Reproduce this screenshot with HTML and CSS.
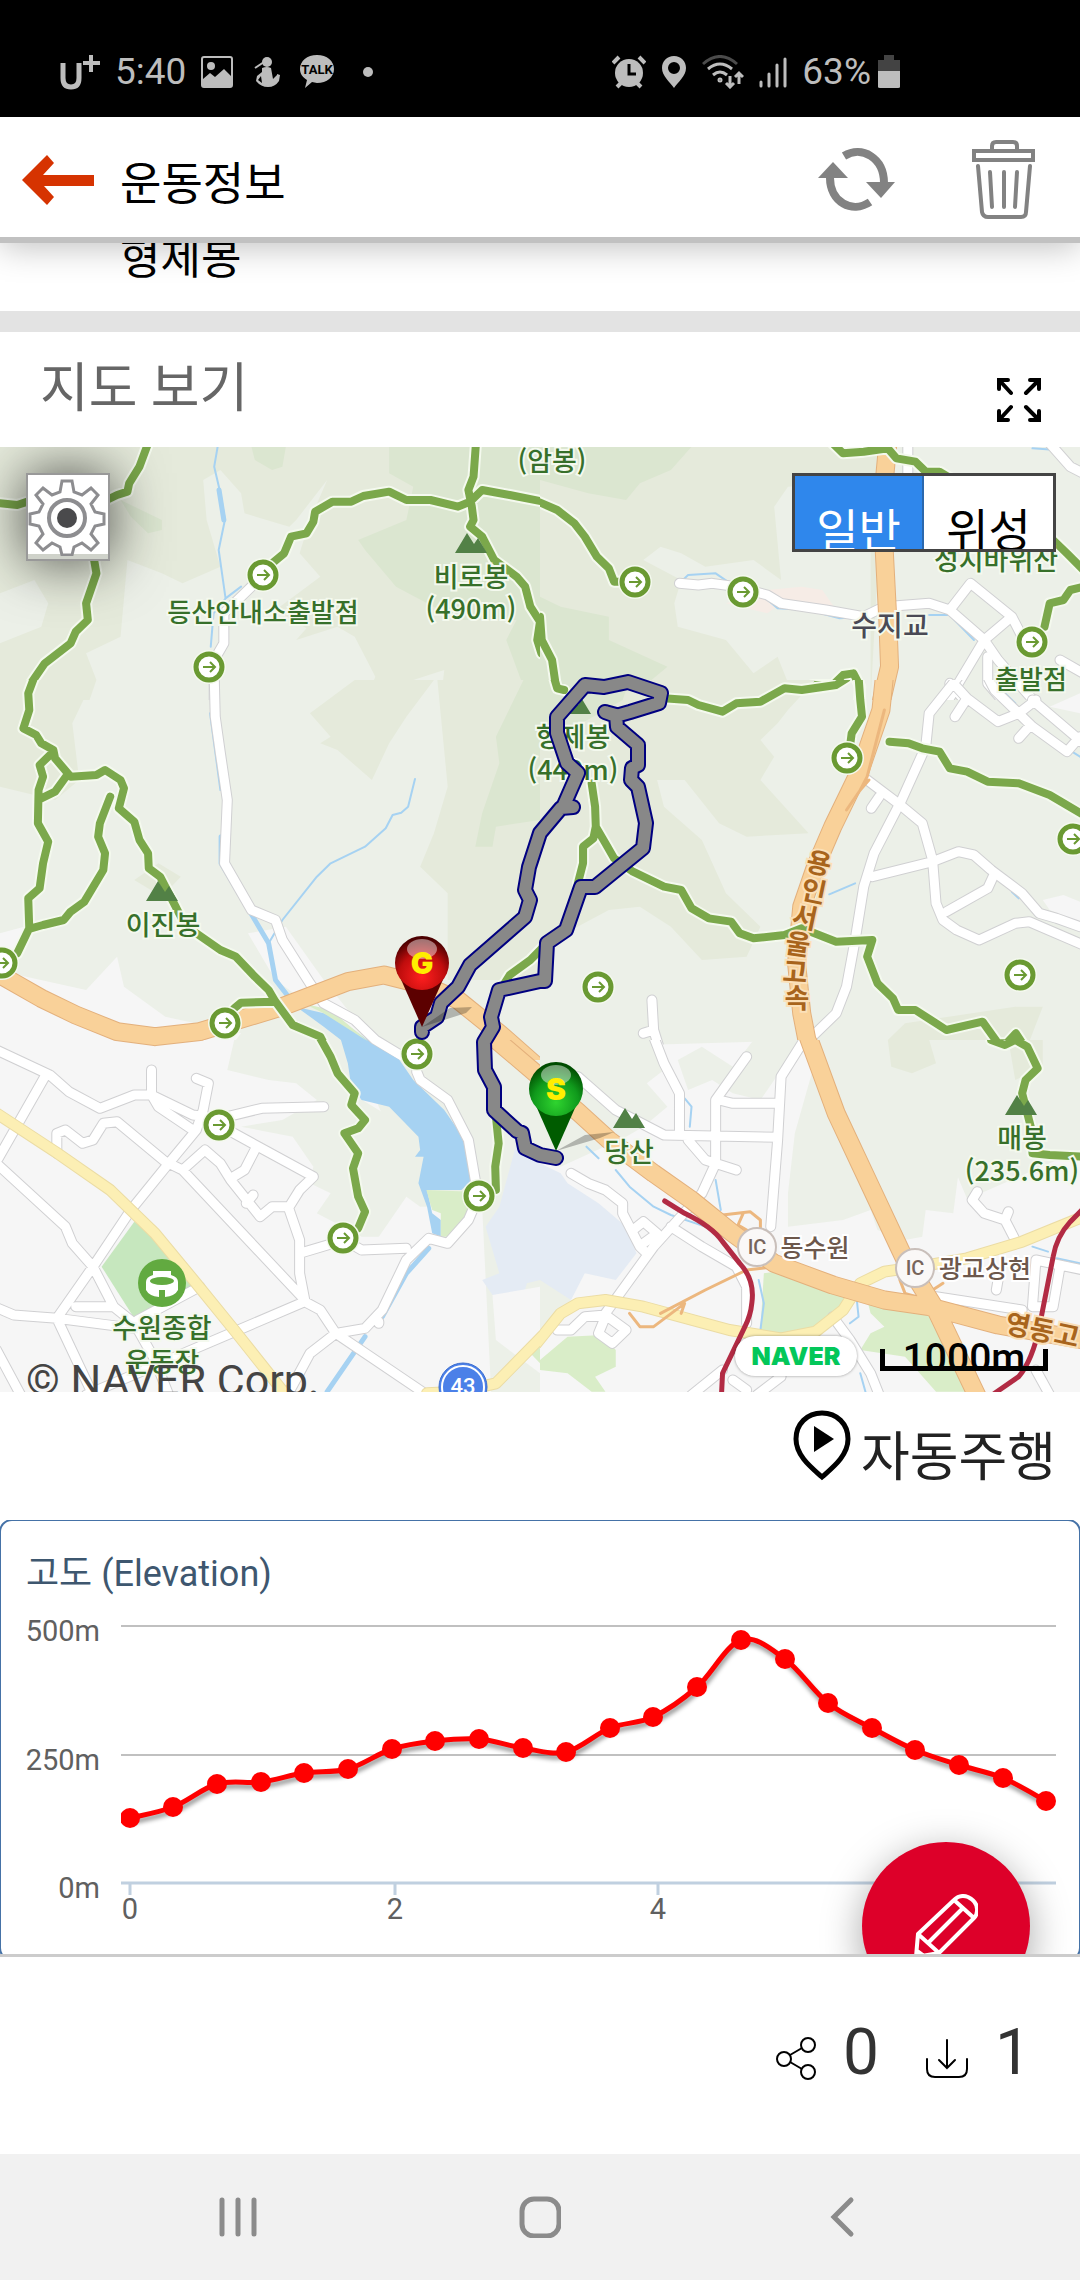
FILE: index.html
```html
<!doctype html>
<html lang="ko">
  <head>
    <meta charset="UTF-8" />
    <meta name="viewport" content="width=device-width, initial-scale=1.0" />
    <title>운동정보</title>
    <link rel="stylesheet" href="styles.css">
  </head>
  <body>
    <div class="status-bar">
      <div class="status-group">
        <svg width="40" height="36" viewBox="0 0 40 36"><path d="M3 9v15q0 9 8 9t8-9V9" fill="none" stroke="#bdbdbd" stroke-width="5" /><path d="M31 1v17M23 9h17" stroke="#bdbdbd" stroke-width="4" /></svg>
        <span>5:40</span>
        <svg width="32" height="32" viewBox="0 0 32 32"><rect x="1" y="1" width="30" height="30" rx="2" fill="none" stroke="#bdbdbd" stroke-width="2" /><circle cx="10" cy="10" r="4" /><path d="M2 23l7-6 5 4 9-8 7 7v10H2z" /></svg>
        <svg width="36" height="32" viewBox="0 0 36 32"><circle cx="19" cy="6" r="5" /><path d="M14 12q5-2 9 0l2 11 4-4V18l3 1-1 6q-4 6-11 6-7 0-12-6l1-5 5-4zM13 20l-3 4 4 3z" fill-rule="evenodd" /><path d="M7 12l9-6" stroke="#bdbdbd" stroke-width="2" /></svg>
        <svg width="36" height="36" viewBox="0 0 36 36"><path d="M18 1c10 0 17 6 17 14s-7 14-17 14l-5-1-7 6 2-8C3 23 1 19 1 15 1 7 8 1 18 1z" /><text x="18" y="20" class="talk">TALK</text></svg>
        <svg width="24" height="12" viewBox="0 0 24 12"><circle cx="18" cy="6" r="5" /></svg>
      </div>
      <div class="status-group status-group-tight">
        <svg width="34" height="34" viewBox="0 0 34 34"><path d="M1 8l6-6M33 8l-6-6M5 32l6-6M29 32l-6-6" stroke="#bdbdbd" stroke-width="4" /><circle cx="17" cy="18" r="14" /><path d="M17 9v10h7" fill="none" stroke="#000" stroke-width="3" /></svg>
        <svg width="26" height="34" viewBox="0 0 26 34"><path fill-rule="evenodd" d="M13 1c7 0 12 5 12 12 0 8-8 14-12 20C9 27 1 21 1 13 1 6 6 1 13 1zm0 6a6 6 0 100 12 6 6 0 000-12z" /></svg>
        <svg width="42" height="34" viewBox="0 0 42 34" fill="none" stroke="#bdbdbd" stroke-width="3"><path d="M1 9q17-15 34 0" stroke="#4b4b4b" /><path d="M6 14q12-10 24 0M11 20q7-6 14 0M28 21v11m-4-4l4 4 4-4M37 29V18m-4 4l4-4 4 4" /><circle cx="18" cy="25" r="1" /></svg>
        <svg width="28" height="34" viewBox="0 0 28 34" stroke="#bdbdbd" stroke-width="3" stroke-linecap="round"><path d="M2 27v4M10 19v12M18 10v21M26 4v27" /></svg>
        <span>63%</span>
        <svg class="battery" width="22" height="34" viewBox="0 0 22 34"><path d="M6 0h10v5h6v11H0V5h6z" fill="#434343" /><path d="M0 16h22v16q0 1-2 1H2q-2 0-2-1z" /></svg>
      </div>
    </div>

    <header class="app-bar">
      <button class="icon-button" aria-label="뒤로">
        <svg width="72" height="52" viewBox="0 0 72 52"><path d="M72 21v11H22l10 11-7 8L0 26 25 1l7 8-11 12z" fill="#d63301" /></svg>
      </button>
      <h1>운동정보</h1>
      <button class="icon-button" aria-label="새로고침">
        <svg width="78" height="64" viewBox="0 0 78 64"><g fill="none" stroke="#828282" stroke-width="8"><path d="M26 8C44-3 66 10 66 35" /><path d="M52 54C34 66 12 54 12 30" /></g><path d="M0 30L15 14l15 16zM48 34h29L63 50z" fill="#828282" /></svg>
      </button>
      <button class="icon-button" aria-label="삭제">
        <svg width="64" height="80" viewBox="0 0 64 80" fill="none" stroke="#828282" stroke-width="4" stroke-linecap="round"><path d="M20 10V6q0-4 4-4h17q4 0 4 4v4M2 11h59v9H2zM6 26l4 46q1 5 6 5h33q5 0 5-5l4-46M18 32l2 35M32 32v35M45 32l-2 35" /></svg>
      </button>
    </header>

    <section class="course">
      <p>형제봉</p>
    </section>

    <section class="map-section">
      <div class="section-head">
        <h2>지도 보기</h2>
        <button class="icon-button" aria-label="전체화면">
          <svg width="44" height="44" viewBox="0 0 44 44" fill="none" stroke="#000" stroke-width="4" stroke-linecap="round"><path d="M14 15L3 3M2 11V2h9M29 15L41 3M33 2h9v9M14 29L3 41M2 33v9h9M29 29l12 12M33 42h9v-9" /></svg>
        </button>
      </div>

      <div class="map">
        <svg class="map-canvas" viewBox="0 0 1080 945" preserveAspectRatio="xMidYMid slice">
          <defs>
            <radialGradient id="red-pin" cx=".5" cy=".75" r=".7"><stop offset="0" stop-color="#ff1f1f" /><stop offset=".6" stop-color="#c00d0d" /><stop offset="1" stop-color="#4c0000" /></radialGradient>
            <radialGradient id="green-pin" cx=".5" cy=".75" r=".7"><stop offset="0" stop-color="#2fd42f" /><stop offset=".6" stop-color="#109a1c" /><stop offset="1" stop-color="#004c00" /></radialGradient>
            <g id="gate"><circle r="17" fill="#f4f9ee" /><circle r="13" fill="#fff" stroke="#6a9a32" stroke-width="5" /><path d="M-6 0H6M1-5l5 5-5 5" fill="none" stroke="#6a9a32" stroke-width="2" /></g>
            <path id="peak" d="M-16 0L-4-20 3-9 7-15 16 0z" fill="#528146" />
            <path id="track" d="M556 711L540 708 525 701 522 686 517 684 494 663 494 640 485 623 484 595 493 580 491 570 499 543 540 534 545 534 547 496 566 483 581 440 595 440 643 401 646 376 638 340 631 333 632 321 638 318 638 298 617 280 616 268 605 265 616 269 630 265 659 256 661 246 628 235 604 240 585 238 557 270 557 286 567 316 578 326 564 358 573 360 561 361 540 386 529 420 525 443 530 453 525 470 470 518 458 540 441 556 437 570 422 580 422 585" />
          </defs>
          <rect width="1080" height="945" fill="#ecf0e8" />

          <!-- top left -->
          <svg x="0" y="-127" width="540" height="380" viewBox="0 0 1568 1140" preserveAspectRatio="none">
            <path class="hill" d="M0 0H1568V1140H0z" />
            <path class="plain" d="M590 480L640 450 700 520 710 580 840 620 860 600 950 480 900 600 870 700 930 770 800 870 890 925 860 960 980 920 1030 950 1090 1070 1060 1140H260L280 1080 250 1000 350 950 370 720 470 760 530 790 640 740 600 600zM0 820L100 780 140 850 120 920 0 970zM1140 1140L1200 1080 1290 1050 1280 1140z" />
            <path class="forest" d="M1130 380H1568V1140H1540L1520 1100 1470 960 1500 900 1330 900 1240 850 1150 800 1060 690 1040 660 1180 600 1200 500 1130 460zM730 380h100l-10 60-30 10-50-30zM350 540L470 600 470 630 430 640 380 590z" />
            <path class="water" d="M632 380L622 440 640 520 653 600 635 690 655 835 620 880 612 980M655 835L700 800" />
            <path class="water wide" d="M636 510L650 600" />
            <g class="roads"><path id="r1" d="M765 765L700 830 650 880 650 970 622 1020 622 1150" /></g>
            <use href="#r1" class="road-fill" />
            <g class="trails"><path id="t1" d="M430 370L405 440 375 490 370 515 340 525 310 540M0 550L50 555 80 545M270 700L280 760 250 850 255 900 220 935 205 970 130 1030 90 1090 85 1150M790 730L825 700 845 650 890 640 910 605 915 575 965 545 1020 545 1055 528 1130 515 1180 540 1250 540 1330 560 1365 545 1400 510 1480 525 1578 545M1382 370L1375 470 1360 510 1370 560 1375 600 1365 620 1400 650 1435 720 1500 770 1525 800 1540 860 1568 905 1560 960 1572 1000" /></g>
            <use href="#t1" class="trail-fill" />
          </svg>

          <!-- top right -->
          <svg x="540" y="-127" width="540" height="380" viewBox="0 0 1568 1140" preserveAspectRatio="none">
            <path class="hill" d="M0 0H980V760L960 1140H0z" />
            <path class="plain" d="M300 720L350 680 410 700 480 740 620 720 700 780 680 560 720 500 960 480V1140H740L690 1010 620 1060 540 960 400 920 390 850 410 780z" />
            <path class="forest" d="M0 380H440L380 450 290 490 250 540 140 520 0 480zM0 830L60 860 200 890 200 960 370 1040 300 1100 0 1140z" />
            <path class="pink" d="M660 810L760 800 820 810 860 870 700 850 660 880 540 850z" />
            <path class="water" d="M405 790L430 765 510 760 545 785M650 830L690 865 780 870 870 895 940 890M1130 885L1190 885 1260 960M1430 385L1500 390 1540 450 1568 465" />
            <g class="roads"><path id="r2" d="M1068 370V460M405 790L460 795 500 790 570 800 660 825 700 850 830 870 940 890 1000 860 1130 850 1190 870 1250 790 1370 890 1400 950M1190 870L1290 960 1180 1150M1370 890L1290 960 1330 1020 1440 1150M1480 370L1540 440 1578 460M1510 1020L1578 1060M1300 1010V1090L1350 1150M1190 1090L1240 1150" /></g>
            <use href="#r2" class="road-fill" />
            <g class="highways"><path id="h2" d="M1010 370L1000 480 1000 700 1010 900 1015 1040 990 1150" /></g>
            <use href="#h2" class="highway-fill" />
            <g class="trails"><path id="t2" d="M-10 543L50 570 100 610 130 650 165 710 200 745 215 785 235 785M850 370L880 400 940 395 1010 385 1035 415 1090 425 1120 455 1160 455 1200 480M1490 660L1530 700 1578 750M1465 920L1480 850 1520 840 1540 810 1578 800M0 890L5 960 35 1020 45 1090 70 1110M360 1130L420 1135M560 1150L620 1145 660 1135 700 1100 740 1115 790 1095 850 1095 880 1065 910 1060 930 1100 925 1150" /></g>
            <use href="#t2" class="trail-fill" />
          </svg>

          <!-- middle left -->
          <svg x="0" y="233" width="540" height="380" viewBox="0 0 1568 1140" preserveAspectRatio="none">
            <path class="hill" d="M0 0H270L210 130 230 300 160 360 0 320zM1030 0H1260L1180 110 1130 190 1080 300 980 210 930 190 960 170 900 100zM1270 0H1568V900H1300L1300 640 1220 560 1260 460 1300 320zM390 600L460 550 525 590 470 650z" />
            <path class="forest" d="M1520 0H1568V420L1440 440 1430 500 1380 500 1400 400 1450 250 1440 170z" />
            <path class="town" d="M0 760L70 740 30 880 250 930 340 830 360 920 480 1010 700 1060 640 1140H0zM720 760L830 740 940 900 1080 1080 880 960 800 900z" />
            <path class="lake" d="M860 980L940 1000 1000 1030 1080 1090 1160 1140H1010L990 1080 940 1040z" />
            <path class="park" d="M880 970L960 990 1070 1085 940 1000z" />
            <path class="water" d="M1205 297L1185 380 1165 398 1140 405 1120 445 1060 500 960 550 920 590 820 720 780 790M610 100L640 330" />
            <path class="water wide" d="M642 470V550L700 650 780 790 800 900 860 980" />
            <g class="roads"><path id="r3" d="M622-10L625 110 640 220 660 360 652 550 730 690 800 720 820 780 900 910 940 970 1030 1020 1090 1080 1170 1130 1225 1160M-10 1105L70 1155" /></g>
            <use href="#r3" class="road-fill" />
            <g class="highways"><path id="h3" d="M10 890L120 955 220 1005 340 1055 450 1070 580 1055 820 980 1010 905 1115 885 1230 915 1330 960 1450 1060 1560 1160" /></g>
            <use href="#h3" class="highway-fill" />
            <g class="trails"><path id="t3" d="M100-10L82 40 85 90 68 145 105 165 120 190 155 210 160 235 205 290 280 285 305 270 350 300 360 325 345 385 390 425 405 480 430 520 432 565 465 590 480 620 510 680 530 720M150 220L115 255 125 290 112 330 110 430 140 485 125 550 115 625 82 655 85 745 50 820M195 285L160 335 120 355M320 350L290 430 285 470 305 520 300 570 245 665 205 695 185 720 125 735 90 745M570 760L640 810 685 830 740 890 780 930 800 965 850 1035 930 1070 970 1150M800 965L700 968 680 985M1578 800L1540 840 1480 885 1465 910" /></g>
            <use href="#t3" class="trail-fill" />
          </svg>

          <!-- middle right -->
          <svg x="540" y="233" width="540" height="380" viewBox="0 0 1568 1140" preserveAspectRatio="none">
            <path class="hill" d="M0 0H800L720 90 690 130 640 180 680 230 640 300 780 460 600 470 520 430 420 300 340 300 360 380 470 480 540 640 640 740 600 830 470 840 380 740 290 680 200 690 0 800zM1010 1140V1080L1060 1030 1380 980 1460 980 1400 1140z" />
            <path class="forest" d="M0 0H260L240 60 0 200z" />
            <path class="town" d="M420 1140L470 1100 500 1140zM1460 660l60-15 48 20v60l-88-35zM1480 80l88-40v60z" />
            <path class="water" d="M840 643L915 610M1350 40L1380 70M1530 205L1568 230M1370 635L1390 655" />
            <g class="roads"><path id="r4" d="M1215-10L1130 100 1120 200 1050 360 970 520 940 620 915 780 890 920 860 1000 780 1080 720 1150M950 300L1040 370 1110 430 1140 540 1150 670 1170 720 1210 750 1275 780 1380 730 1420 725 1578 795M965 590L1140 545 1215 515 1260 525 1310 570 1400 640 1450 700 1500 715 1568 740M1320 580L1300 625 1180 695M1200 10L1240 55 1330 125 1390 100 1440 60M1240 55L1205 110M1300-10L1320 30 1430 140 1530 215 1568 170M1430 60L1578 190M1420 140L1390 175M325 960L330 1050 300 1060M330 1050L360 1150M985 350L962 385M590 1135V1150" /></g>
            <use href="#r4" class="road-fill" />
            <g class="highways"><path id="h4" d="M1000-10L990 90 930 270 850 440 800 560 760 680 745 850 760 1000 775 1080 810 1150" /></g>
            <use href="#h4" class="highway-fill" />
            <path class="ramp" d="M1000 90L950 290 930 330M955 300L930 330 890 390" />
            <g class="trails"><path id="t4" d="M40-10L50 25 70 30M360 55L430 60 460 75 530 95 570 70 640 65 710 25 760 30 860 15 890-5M925-10L930 60 935 110 905 160 900 200M1015 185L1070 190 1110 205 1160 215 1190 265 1240 275 1300 305 1390 310 1480 345 1578 405M150 310L160 380 162 440 190 490 215 535 270 575 360 620 410 630 440 685 490 715 555 725 580 760 620 775 710 765 760 745 860 785 965 780 950 830 980 910 1025 955 1040 990 1090 990 1180 1050 1285 1025 1330 1090 1355 1090 1382 1060 1420 1120 1425 1150M162 440L155 475 125 500 125 550 110 610" /></g>
            <use href="#t4" class="trail-fill" />
          </svg>

          <!-- bottom left -->
          <svg x="0" y="593" width="540" height="380" viewBox="0 0 1568 1140" preserveAspectRatio="none">
            <path class="town" d="M0 0H1020L1220 500 1400 500 1430 1140H0z" />
            <path class="plain" d="M680 0H1020L1020 160 1210 280 1210 420 1220 500 1180 470 1100 590 1050 590 920 520 960 460 900 430 910 380 850 290 700 260 820 240 920 180 860 130 780 120 660 90z" />
            <path class="campus" d="M1568 360L1500 310 1450 500 1410 560 1450 700 1400 720 1430 765 1520 765 1530 730 1568 720z" />
            <path class="town" d="M1430 765L1568 740V1000L1440 900z" />
            <path class="lake" d="M990 0H1060L1160 60 1200 120 1290 210 1350 300 1370 420 1340 450 1240 450 1255 520 1280 540V590L1255 580 1240 500 1215 430 1230 350 1205 350 1220 330 1215 290 1130 200 1050 180 1020 140 1010 70z" />
            <path class="park" d="M1238 450L1370 455 1350 550 1300 590H1280V520L1255 510zM1540 940L1568 910V970z" />
            <path fill="#c6e7be" d="M390 545L450 590 560 740 390 835 295 680z" />
            <path class="water wide" d="M1245 625L1180 700 1110 830M1060 890L950 1055" />
            <g class="roads"><path id="r5" d="M-10 30L145 105 200 155 290 205 390 165 440 165 560 225 600 230M440 90V165L460 200 560 270M570 115L605 130 590 210 570 270 490 370 380 510 270 680 165 835M130 110L-5 355M-5 375L190 560 210 610 270 680 330 800 390 850 450 960 490 1065M165 340L165 280 190 270 240 310 270 300 300 250 340 245 480 365 530 390 885 780M530 390L595 330 640 370 670 420 755 530 790 500 840 500 870 450 910 410 750 320 680 280 630 255M745 320L710 390 670 415M715 490L735 465M640 235L760 205 940 200M840 510L870 600 870 700 885 780M870 640L1000 600 1050 630 1180 625M1210 95L1220 120 1300 180 1360 300 1380 420 1385 480 1360 540 1300 610 1245 595 1180 660 1110 810 1060 865 975 880 900 940 840 1055M885 785L930 810 975 880 1240 1065M885 785L250 1065M-10 803L40 825 165 835 390 865M165 835L270 1065M220 800L330 800M580 740L400 840M-10 930L60 1065M1100 845V850" /></g>
            <use href="#r5" class="road-fill" />
            <g class="avenues"><path id="a5" d="M-10 220L160 335 320 450 450 580 570 730 680 870 830 1065M1240 1060L1330 1055 1440 1030 1578 885" /></g>
            <use href="#a5" class="avenue-fill" />
            <g class="highways"><path id="h5" d="M340-25L450-10 580-25M1430-10L1578 120" /></g>
            <use href="#h5" class="highway-fill" />
            <g class="trails"><path id="t5" d="M930-5L960 50 980 100 1030 160 1020 195 1060 240 1040 265 1000 280 1040 340 1025 385 1040 470 1060 515 1040 565M1440 230L1448 310 1438 380 1440 450" /></g>
            <use href="#t5" class="trail-fill" />
          </svg>

          <!-- bottom right -->
          <svg x="540" y="593" width="540" height="380" viewBox="0 0 1568 1140" preserveAspectRatio="none">
            <path class="town" d="M80 100L120 20 800 0 900 500 1568 300V1140H0V300z" />
            <path class="plain" d="M0 0H330L360 90 310 130 370 200 300 260 250 290 60 380 0 360zM400 60L470 20 560 80 620 0H760L640 180 560 160 500 120 430 150zM790 0H1568V330L1280 460 1250 500 1180 330 1220 360 1200 520 1120 510 1110 590 1060 600 980 570 960 510 880 540 720 560 720 460 740 280 800 60zM0 700L90 780 0 880z" />
            <path class="hill" d="M1010 0H1130L1150 70 1080 100 1020 80zM1360 0H1460V80L1380 120z" />
            <path class="campus" d="M0 370L60 400 80 430 170 490 250 560 280 640 220 720 130 700 90 780 0 720z" />
            <path class="park" d="M650 700L720 690 860 740 920 770 850 820 800 870 720 885 640 870zM950 780L1130 820 1180 930 1250 1055H1150L1060 950 930 930 960 880 1000 860 960 820zM0 960L80 890 180 885 220 930 220 980 160 1010 190 1055H150L80 1000 0 990z" />
            <path class="water" d="M420 175L440 200 435 260M510 420L525 510M635 720L650 790 640 870M920 780L925 830 900 850M135 320L170 355M220 390L260 440 330 500 380 525 480 560M1430 620L1475 635M1500 655L1568 670M930 1000L945 1055" />
            <g class="roads"><path id="r6" d="M330-10L360 70 405 160V280M600 50L510 180V370L470 460 330 620 190 820M520 180L560 190 690 190M110 110L220 210 360 285 690 292M770-5L700 110 690 300 670 560M430 300L480 360 570 390M90 400L140 430 190 450 240 490 240 520 290 620 310 640M270 570L300 545 340 580 300 610M380 560L470 620 570 680 600 740 600 850M50 870L90 870 130 830 190 825 250 870 210 910 170 880 190 830M850 830L900 900 960 1000 985 1065M1270 455L1255 480 1290 520 1350 540 1380 600M1350 540L1360 515M1325 750L1330 720M1150 770L1400 810M1440 660L1578 690M1440 660L1430 800H1490L1510 680M700 1010L630 1065M560 1020L600 1050M530 990L440 1065M1440 990L1480 1065" /></g>
            <use href="#r6" class="road-fill" />
            <g class="avenues"><path id="a6" d="M-10 910L60 820 110 790 190 780 300 800 550 870 700 895 800 875 880 810 930 730 1000 695 1100 680 1240 655 1400 605 1578 530" /></g>
            <use href="#a6" class="avenue-fill" />
            <path class="ramp" d="M680 680L600 690 480 750 350 820M530 525L610 515 640 540 640 570M590 520L575 555 600 570M260 820L290 860 330 860 420 790 410 820M1045 720L1060 760 1110 775M1170 730L1140 750" />
            <g class="highways"><path id="h6" d="M-10 110L110 215 200 300 330 400 440 480 560 580 680 670 850 735 1000 780 1130 800 1330 855 1578 900M775-20L860 220 960 440 1060 660 1150 810 1270 1070" /></g>
            <use href="#h6" class="highway-fill" />
            <path class="rail" d="M362 483L420 520Q500 560 530 605L580 670Q625 720 615 790 612 825 595 860L530 1000 527 1065M1578 505L1540 545Q1500 590 1490 650L1450 860Q1430 960 1390 1010L1320 1060" />
            <g class="trails"><path id="t6" d="M1310 0L1350 15 1380 0 1415 20 1445 85 1410 120 1400 160 1425 260 1430 340 1480 345 1578 350" /></g>
            <use href="#t6" class="trail-fill" />
          </svg>

          <use href="#gate" x="263" y="128" />
          <use href="#gate" x="209" y="220" />
          <use href="#gate" x="635" y="135" />
          <use href="#gate" x="743" y="145" />
          <use href="#gate" x="1032" y="195" />
          <use href="#gate" x="2" y="516" />
          <use href="#gate" x="225" y="576" />
          <use href="#gate" x="417" y="607" />
          <use href="#gate" x="598" y="540" />
          <use href="#gate" x="847" y="311" />
          <use href="#gate" x="1073" y="392" />
          <use href="#gate" x="1020" y="528" />
          <use href="#gate" x="219" y="678" />
          <use href="#gate" x="479" y="749" />
          <use href="#gate" x="343" y="791" />

          <use href="#peak" x="471" y="106" />
          <use href="#peak" x="162" y="454" />
          <use href="#peak" x="575" y="267" />
          <use href="#peak" x="629" y="681" />
          <use href="#peak" x="1021" y="668" />

          <!-- stadium -->
          <circle cx="162" cy="836" r="24" fill="#62aa40" />
          <path d="M153 824h18v4q7 2 7 7v8q-3 6-13 7v-7h-6v7q-10-1-13-7v-8q0-5 7-7z" fill="#fff" />
          <ellipse cx="162" cy="834" rx="12" ry="4" fill="#62aa40" />

          <g class="labels">
            <text x="552" y="24">(암봉)</text>
            <text x="471" y="140">비로봉</text>
            <text x="471" y="172">(490m)</text>
            <text x="263" y="175" class="label-small">등산안내소출발점</text>
            <text x="996" y="123">성지바위산</text>
            <text x="1031" y="242" class="label-small">출발점</text>
            <text x="573" y="300">형제봉</text>
            <text x="573" y="333">(449m)</text>
            <text x="163" y="488">이진봉</text>
            <text x="629" y="715">당산</text>
            <text x="1022" y="701">매봉</text>
            <text x="1022" y="734">(235.6m)</text>
            <text x="162" y="891">수원종합</text>
            <text x="162" y="925">운동장</text>
            <text x="890" y="189" class="bridge">수지교</text>
            <text x="815" y="810" class="junction">동수원</text>
            <text x="985" y="831" class="junction">광교상현</text>
            <g class="highway-name">
              <text x="819" y="426" transform="rotate(12 819 416)">용</text>
              <text x="814" y="454" transform="rotate(12 814 444)">인</text>
              <text x="805" y="480" transform="rotate(12 805 470)">서</text>
              <text x="798" y="507" transform="rotate(8 798 497)">울</text>
              <text x="795" y="535" transform="rotate(4 795 525)">고</text>
              <text x="797" y="561">속</text>
              <text x="1018" y="888" transform="rotate(12 1018 878)">영</text>
              <text x="1042" y="893" transform="rotate(12 1042 883)">동</text>
              <text x="1067" y="898" transform="rotate(12 1067 888)">고</text>
            </g>
          </g>

          <g class="interchange">
            <circle cx="757" cy="800" r="19" />
            <text x="757" y="807">IC</text>
            <circle cx="915" cy="821" r="19" />
            <text x="915" y="828">IC</text>
          </g>
          <circle cx="463" cy="940" r="24" fill="#4b80e8" stroke="#3d6ed0" stroke-width="1" />
          <circle cx="463" cy="940" r="21" fill="none" stroke="#fff" stroke-width="2" />
          <text x="463" y="947" class="route-number">43</text>

          <use href="#track" class="track-edge" />
          <use href="#track" class="track" />

          <path class="pin-shadow" d="M422 580L450 561 472 560 466 566zM556 704L585 688 614 685 600 691z" />
          <path d="M399 528L422 580 445 528z" fill="#5c0000" />
          <circle cx="422" cy="516" r="27" fill="url(#red-pin)" />
          <ellipse cx="422" cy="502" rx="15" ry="10" fill="#fff" opacity=".45" />
          <text x="422" y="527" class="pin-letter">G</text>
          <path d="M533 652L556 704 579 652z" fill="#005c00" />
          <circle cx="556" cy="642" r="27" fill="url(#green-pin)" />
          <ellipse cx="556" cy="628" rx="15" ry="10" fill="#fff" opacity=".45" />
          <text x="556" y="653" class="pin-letter">S</text>
        </svg>

        <button class="map-settings" aria-label="지도 설정">
          <svg width="78" height="78" viewBox="0 0 78 78" fill="none" stroke="#8d8d90" stroke-width="3"><path d="M34 3h10l2 11 8 3 9-7 7 7-7 9 4 8 9 2v10l-9 2-4 8 7 9-7 7-9-7-8 4-2 8H34l-2-8-8-4-9 7-7-7 7-9-4-8-9-2V36l9-2 4-8-7-9 7-7 9 7 8-3z" /><circle cx="39" cy="40" r="18" stroke-width="4" /><circle cx="39" cy="40" r="10" fill="#4a4a4c" stroke="none" /></svg>
        </button>
        <div class="map-type">
          <button class="active">일반</button>
          <button>위성</button>
        </div>
        <small class="copyright">© NAVER Corp.</small>
        <a class="naver" href="#">NAVER</a>
        <div class="scale">1000m</div>
      </div>

      <div class="play-row">
        <button class="play">
          <svg width="60" height="72" viewBox="0 0 60 72"><path d="M29 3c15 0 26 11 26 26 0 17-16 29-26 38C19 58 3 46 3 29 3 14 14 3 29 3z" fill="none" stroke="#000" stroke-width="5" /><path d="M21 16l20 13-20 13z" /></svg>
          <span>자동주행</span>
        </button>
      </div>
    </section>

    <section class="chart">
      <svg class="chart-canvas" viewBox="0 0 1080 434" role="img" aria-label="고도">
        <rect x="0" y="0" width="1080" height="440" rx="12" fill="#fff" stroke="#4572a7" stroke-width="2" />
        <text x="26" y="66" class="chart-title">고도 (Elevation)</text>
        <path d="M121 106H1056M121 235H1056" stroke="#c0c0c0" stroke-width="2" />
        <path d="M121 363H1056M130 363v12M395 363v12M658 363v12" fill="none" stroke="#c0d0e0" stroke-width="3" />
        <g class="axis axis-y">
          <text x="100" y="121">500m</text>
          <text x="100" y="250">250m</text>
          <text x="100" y="378">0m</text>
        </g>
        <g class="axis axis-x">
          <text x="130" y="399">0</text>
          <text x="395" y="399">2</text>
          <text x="658" y="399">4</text>
        </g>
        <clipPath id="plot"><path d="M121 0h935v380H121z" /></clipPath>
        <g id="series" clip-path="url(#plot)"></g>
      </svg>
      <button class="fab" aria-label="수정">
        <svg width="64" height="64" viewBox="0 0 64 64" fill="none" stroke="#fff" stroke-width="4" stroke-linejoin="round"><path d="M4 40L40 6q6-6 14-3 10 5 9 14 0 4-3 7L25 59 2 63zM4 40l21 19M40 6l20 18M49 14L14 49M2 56l8 6" /></svg>
      </button>
    </section>

    <footer class="actions">
      <button class="action">
        <svg width="40" height="44" viewBox="0 0 40 44" fill="none" stroke="#000" stroke-width="2"><circle cx="8" cy="22" r="7" /><circle cx="32" cy="8" r="7" /><circle cx="32" cy="35" r="7" /><path d="M14 18l12-7M14 25l12 7" /></svg>
        0
      </button>
      <button class="action">
        <svg width="42" height="44" viewBox="0 0 42 44" fill="none" stroke="#000" stroke-width="2" stroke-linecap="round"><path d="M1 22v10q0 8 8 8h24q8 0 8-8V22M21 3v28M13 23l8 8 8-8" /></svg>
        1
      </button>
    </footer>

    <nav class="nav-bar">
      <button class="icon-button" aria-label="최근 앱">
        <svg width="42" height="42" viewBox="0 0 42 42"><path d="M5 4v34M21 4v34M37 4v34" /></svg>
      </button>
      <button class="icon-button" aria-label="홈">
        <svg width="42" height="42" viewBox="0 0 42 42"><rect x="3" y="3" width="37" height="37" rx="12" /></svg>
      </button>
      <button class="icon-button" aria-label="이전">
        <svg width="42" height="42" viewBox="0 0 42 42"><path d="M30 4L13 21l17 17" /></svg>
      </button>
    </nav>

    <script src="chart.js"></script>
  </body>
</html>
```
FILE: styles.css
```css
* {
  box-sizing: border-box;
}

body {
  display: flex;
  flex-direction: column;
  min-height: 100vh;
  margin: 0;
  background: #fff;
  color: #000;
  font-family: Roboto, 'Noto Sans CJK KR', sans-serif;
}

h1,
h2,
p {
  margin: 0;
  font-weight: 400;
}

button {
  margin: 0;
  padding: 0;
  border: 0;
  background: none;
  color: inherit;
  font: inherit;
  cursor: pointer;
}

svg {
  display: block;
}

.icon-button {
  display: flex;
  align-items: center;
  justify-content: center;
}

/* status bar */
.status-bar {
  display: flex;
  justify-content: space-between;
  height: 117px;
  padding: 26px 180px 0 60px;
  background: #000;
  color: #bdbdbd;
  font-size: 37px;
}

.status-group {
  display: flex;
  align-items: center;
  gap: 15px;
  fill: #bdbdbd;
}

.battery {
  margin-left: -8px;
}

.talk {
  fill: #000;
  font-size: 13px;
  font-weight: 700;
  text-anchor: middle;
}

/* app bar */
.app-bar {
  position: relative;
  z-index: 2;
  display: flex;
  align-items: center;
  height: 126px;
  padding: 6px 44px 0 22px;
  border-bottom: 6px solid #c1c1c1;
  background: #fff;
  box-shadow: 0 4px 32px rgba(0, 0, 0, 0.25);
}

.app-bar h1 {
  flex: 1;
  margin-left: 26px;
  font-size: 45px;
}

.app-bar .icon-button + .icon-button {
  margin-left: 76px;
}

.course {
  height: 68px;
  overflow: hidden;
}

.course p {
  margin-top: -16px;
  padding-left: 120px;
  font-size: 44px;
  line-height: 64px;
}

.map-section {
  border-top: 21px solid #e3e3e3;
}

.section-head {
  display: flex;
  align-items: center;
  justify-content: space-between;
  height: 115px;
  padding: 0 39px 0 40px;
}

.section-head h2 {
  padding-bottom: 2px;
  color: #666;
  font-size: 53px;
  line-height: 52px;
}

.section-head .icon-button {
  padding-top: 20px;
}

/* map */
.map {
  position: relative;
  height: 945px;
  overflow: hidden;
}

.map-canvas {
  width: 100%;
  height: 100%;
}

.map-canvas path {
  vector-effect: non-scaling-stroke;
}

.hill {
  fill: #e5eadb;
}

.forest {
  fill: #dbe6d0;
}

.plain {
  fill: #ecf0e8;
}

.town {
  fill: #f6f6f6;
}

.park {
  fill: #d9edc8;
}

.campus {
  fill: #e4ebf4;
}

.pink {
  fill: #f6ece6;
}

.lake {
  fill: #a6d2f2;
}

.water,
.roads,
.road-fill,
.avenues,
.avenue-fill,
.highways,
.highway-fill,
.trails,
.trail-fill,
.ramp,
.rail,
.track,
.track-edge {
  fill: none;
  stroke-linecap: round;
  stroke-linejoin: round;
}

.water {
  stroke: #a6d2f2;
  stroke-width: 2px;
}

.wide {
  stroke-width: 5px;
}

.roads {
  stroke: #d0d0d2;
  stroke-width: 11px;
}

.road-fill {
  stroke: #fff;
  stroke-width: 9px;
}

.avenues {
  stroke: #ebdca4;
  stroke-width: 12px;
}

.avenue-fill {
  stroke: #fcefb4;
  stroke-width: 10px;
}

.highways {
  stroke: #e3b07c;
  stroke-width: 19px;
}

.highway-fill {
  stroke: #f9d199;
  stroke-width: 17px;
}

.trails {
  stroke: #f4f9ee;
  stroke-width: 12px;
}

.trail-fill {
  stroke: #7ba84b;
  stroke-width: 8px;
}

.ramp {
  stroke: #ecb77e;
  stroke-width: 3px;
}

.rail {
  stroke: #b22b44;
  stroke-width: 5px;
}

.track-edge {
  stroke: #000080;
  stroke-width: 16px;
}

.track {
  stroke: #888;
  stroke-width: 12px;
}

.labels {
  fill: #37702a;
  stroke: #f4f9ee;
  stroke-width: 4px;
  paint-order: stroke;
  font-family: 'Noto Sans CJK KR', sans-serif;
  font-size: 27px;
  font-weight: 500;
  text-anchor: middle;
}

.label-small {
  font-size: 26px;
}

.bridge {
  fill: #4a4a55;
  font-size: 28px;
}

.junction {
  fill: #6d584c;
  stroke: #fff;
  font-size: 25px;
}

.highway-name {
  fill: #a8641c;
  stroke: #fbe0b8;
  font-weight: 700;
}

.interchange circle {
  fill: #faf8f7;
  stroke: #c9bfba;
  stroke-width: 2px;
}

.interchange text {
  fill: #77655c;
  font-size: 20px;
  font-weight: 500;
  text-anchor: middle;
}

.route-number {
  fill: #fff;
  font-size: 22px;
  font-weight: 500;
  text-anchor: middle;
}

.pin-shadow {
  fill: #000;
  opacity: 0.25;
}

.pin-letter {
  fill: #ffee00;
  font-family: Inter, sans-serif;
  font-size: 30px;
  font-weight: 900;
  text-anchor: middle;
}

.map-settings {
  position: absolute;
  top: 26px;
  left: 26px;
  width: 84px;
  height: 88px;
  border: 2px solid #999;
  background: linear-gradient(#fff 79px, #cfd2ca 79px);
  box-shadow: 0 0 56px rgba(0, 0, 0, 0.7);
}

.map-type {
  position: absolute;
  top: 26px;
  right: 24px;
  display: grid;
  grid-template-columns: 1fr 1fr;
  width: 264px;
  height: 79px;
  border: 3px solid #444;
  background: #fff;
  overflow: hidden;
}

.map-type button {
  height: 102px;
  font-size: 46px;
}

.map-type .active {
  border-right: 2px solid #2b68ad;
  background: #2f87ec;
  color: #fff;
}

.copyright {
  position: absolute;
  bottom: -14px;
  left: 26px;
  color: #444;
  font-size: 43px;
  line-height: 52px;
}

.naver {
  position: absolute;
  right: 223px;
  bottom: 16px;
  width: 122px;
  border-radius: 20px;
  background: #fff;
  box-shadow: 0 0 3px rgba(0, 0, 0, 0.4);
  color: #03c75a;
  font-family: Inter, sans-serif;
  font-size: 25px;
  font-weight: 900;
  line-height: 40px;
  text-align: center;
  text-decoration: none;
}

.scale {
  position: absolute;
  right: 32px;
  bottom: 21px;
  display: flex;
  justify-content: center;
  width: 168px;
  height: 22px;
  border: 5px solid #000;
  border-top: 0;
  font-size: 39px;
  font-weight: 500;
  line-height: 18px;
}

.play-row {
  display: flex;
  justify-content: flex-end;
  height: 128px;
  padding: 18px 24px 0;
}

.play {
  display: flex;
  align-items: flex-start;
  gap: 8px;
  color: #222;
  font-size: 53px;
  line-height: 96px;
}

/* elevation chart */
.chart {
  position: relative;
  overflow: hidden;
  border-bottom: 3px solid #ccc;
}

.chart-canvas {
  width: 100%;
}

.chart-title {
  fill: #3e576f;
  font-size: 36px;
}

.axis {
  fill: #606060;
  font-size: 29px;
}

.axis-y {
  text-anchor: end;
}

.axis-x {
  text-anchor: middle;
}

.series-line {
  fill: none;
  stroke: #f00;
  stroke-width: 5px;
  filter: drop-shadow(1px 4px 2px rgba(0, 0, 0, 0.4));
}

.series-dot {
  fill: #f00;
}

.fab {
  position: absolute;
  top: 322px;
  right: 50px;
  display: flex;
  justify-content: center;
  width: 168px;
  height: 168px;
  padding-top: 52px;
  border-radius: 50%;
  background: #dd0029;
  box-shadow: 0 10px 40px rgba(0, 0, 0, 0.35);
}

.actions {
  display: flex;
  flex: 1;
  align-items: center;
  justify-content: flex-end;
  gap: 47px;
  padding: 0 49px 6px 0;
}

.action {
  display: flex;
  align-items: center;
  gap: 27px;
  color: #333;
  font-size: 64px;
}

.action svg {
  margin-top: 12px;
}

.nav-bar {
  display: grid;
  grid-template-columns: repeat(3, 1fr);
  height: 126px;
  padding: 0 87px;
  background: #f1f1f1;
}

.nav-bar svg {
  fill: none;
  stroke: #8b8b8b;
  stroke-width: 5px;
  stroke-linecap: round;
}
```
FILE: chart.js
```javascript
const points = [
  [130, 298], [173, 287], [217, 264], [261, 262], [304, 253], [348, 249],
  [392, 229], [435, 221], [479, 219], [523, 228], [566, 232], [610, 208],
  [653, 197], [697, 167], [741, 120], [785, 139], [828, 183], [872, 208],
  [915, 230], [959, 245], [1003, 258], [1046, 281],
];

// Smooth line through all the points
function buildPath(pts) {
  let d = `M${pts[0]}`;
  for (let i = 0; i < pts.length - 1; i++) {
    const prev = pts[i - 1] || pts[i];
    const a = pts[i];
    const b = pts[i + 1];
    const next = pts[i + 2] || b;
    d += `C${a[0] + (b[0] - prev[0]) / 6} ${a[1] + (b[1] - prev[1]) / 6}`;
    d += ` ${b[0] - (next[0] - a[0]) / 6} ${b[1] - (next[1] - a[1]) / 6} ${b[0]} ${b[1]}`;
  }
  return d;
}

const series = document.getElementById('series');
const dots = points
  .map(([x, y]) => `<circle class="series-dot" cx="${x}" cy="${y}" r="10" />`)
  .join('');
series.innerHTML = `<path class="series-line" d="${buildPath(points)}" />${dots}`;
```
